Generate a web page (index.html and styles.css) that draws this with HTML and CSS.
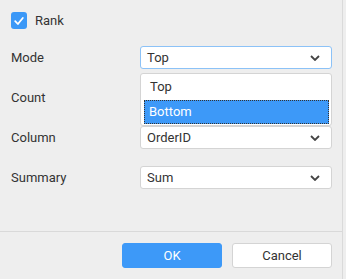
FILE: index.html
```html
<!DOCTYPE html>
<html>
<head>
<meta charset="utf-8">
<link rel="stylesheet" href="styles.css">
</head>
<body>
<div class="panel">
  <div class="body">
    <div class="check-row">
      <span class="checkbox">
        <svg width="12" height="12" viewBox="0 0 12 12"><path d="M2.2 6.2 L4.9 9 L9.8 3" fill="none" stroke="#fff" stroke-width="1.8" stroke-linecap="round" stroke-linejoin="round"/></svg>
      </span>
      <span class="check-label">Rank</span>
    </div>
    <div class="row">
      <span class="label">Mode</span>
      <div class="select-wrap">
        <div class="select focused"><span>Top</span><svg class="chev" width="10" height="6" viewBox="0 0 10 6"><path d="M1 1 L5 5 L9 1" fill="none" stroke="#444" stroke-width="1.8"/></svg></div>
        <div class="dropdown">
          <div class="opt">Top</div>
          <div class="opt active">Bottom</div>
        </div>
      </div>
    </div>
    <div class="row">
      <span class="label">Count</span>
      <div class="select-wrap">
        <div class="select"><span></span><svg class="chev" width="10" height="6" viewBox="0 0 10 6"><path d="M1 1 L5 5 L9 1" fill="none" stroke="#444" stroke-width="1.8"/></svg></div>
      </div>
    </div>
    <div class="row">
      <span class="label">Column</span>
      <div class="select-wrap">
        <div class="select"><span>OrderID</span><svg class="chev" width="10" height="6" viewBox="0 0 10 6"><path d="M1 1 L5 5 L9 1" fill="none" stroke="#444" stroke-width="1.8"/></svg></div>
      </div>
    </div>
    <div class="row">
      <span class="label">Summary</span>
      <div class="select-wrap">
        <div class="select"><span>Sum</span><svg class="chev" width="10" height="6" viewBox="0 0 10 6"><path d="M1 1 L5 5 L9 1" fill="none" stroke="#444" stroke-width="1.8"/></svg></div>
      </div>
    </div>
  </div>
  <div class="footer">
    <button class="btn primary">OK</button>
    <button class="btn">Cancel</button>
  </div>
</div>
</body>
</html>
```

FILE: styles.css
```css
html, body {
  margin: 0;
  padding: 0;
  background: #eeeeee;
}
body {
  font-family: Roboto, "Liberation Sans", Arial, sans-serif;
  font-size: 13px;
  color: #333;
}
.panel {
  width: 342px;
  height: 279px;
  border-right: 1px solid #dadada;
  box-sizing: content-box;
  display: flex;
  flex-direction: column;
}
.body {
  padding: 12px 10px 0 11px;
  display: flex;
  flex-direction: column;
  gap: 17px;
  height: 219px;
  box-sizing: border-box;
}
.check-row {
  display: flex;
  align-items: center;
  height: 17px;
  gap: 8px;
}
.checkbox {
  width: 16px;
  height: 17px;
  border-radius: 3px;
  background: #3b98f7;
  display: flex;
  align-items: center;
  justify-content: center;
  box-sizing: border-box;
}
.check-label {
  color: #333;
}
.row {
  display: flex;
  align-items: center;
  height: 23px;
}
.label {
  width: 129px;
  flex: none;
}
.select-wrap {
  position: relative;
  width: 192px;
  height: 23px;
}
.select {
  height: 23px;
  box-sizing: border-box;
  background: #fff;
  border: 1px solid #d4d4d4;
  border-radius: 3px;
  display: flex;
  align-items: center;
  justify-content: space-between;
  padding: 0 11px 0 6px;
}
.select.focused {
  border-color: #8cc2f7;
}
.chev {
  display: block;
}
.dropdown {
  position: absolute;
  left: 0;
  top: 27px;
  width: 192px;
  box-sizing: border-box;
  background: #fff;
  border: 1px solid #d4d4d4;
  border-radius: 3px;
  padding: 0 2px 1px 3px;
  z-index: 5;
}
.opt {
  height: 26px;
  line-height: 26px;
  padding-left: 6px;
}
.opt.active {
  height: 24px;
  line-height: 23px;
  background: #3d99f8;
  color: #fff;
  outline: 1px dotted #333;
  outline-offset: -1px;
  padding-left: 5px;
}
.footer {
  border-top: 1px solid #d9d9d9;
  margin-top: 12px;
  padding: 11px 10px 0 0;
  display: flex;
  justify-content: flex-end;
  gap: 10px;
}
.btn {
  width: 100px;
  height: 25px;
  box-sizing: border-box;
  border: 1px solid #d4d4d4;
  border-radius: 3px;
  background: #fff;
  font-family: Roboto, "Liberation Sans", Arial, sans-serif;
  font-size: 13px;
  color: #333;
  padding: 0;
}
.btn.primary {
  background: #3d99f8;
  border-color: #3d99f8;
  color: #fff;
}
```
